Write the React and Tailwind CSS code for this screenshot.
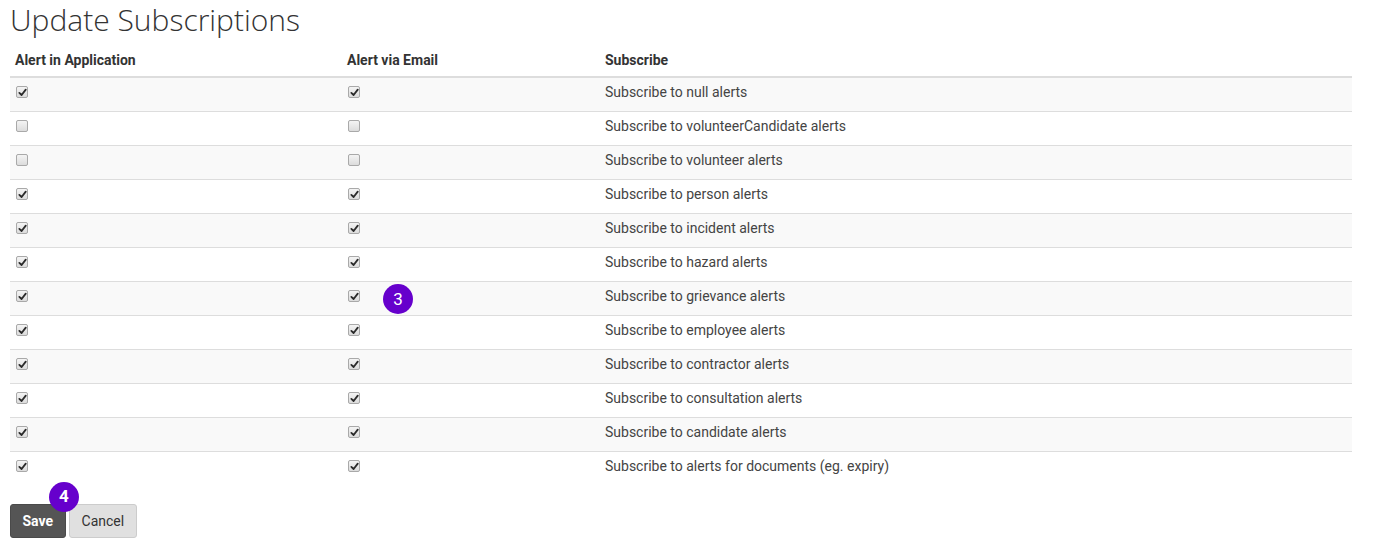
import React from "react";

const ROWS = [
  { app: true,  email: true,  label: "Subscribe to null alerts" },
  { app: false, email: false, label: "Subscribe to volunteerCandidate alerts" },
  { app: false, email: false, label: "Subscribe to volunteer alerts" },
  { app: true,  email: true,  label: "Subscribe to person alerts" },
  { app: true,  email: true,  label: "Subscribe to incident alerts" },
  { app: true,  email: true,  label: "Subscribe to hazard alerts" },
  { app: true,  email: true,  label: "Subscribe to grievance alerts", badge: "3" },
  { app: true,  email: true,  label: "Subscribe to employee alerts" },
  { app: true,  email: true,  label: "Subscribe to contractor alerts" },
  { app: true,  email: true,  label: "Subscribe to consultation alerts" },
  { app: true,  email: true,  label: "Subscribe to candidate alerts" },
  { app: true,  email: true,  label: "Subscribe to alerts for documents (eg. expiry)" },
];

function Check({ checked }) {
  return (
    <span className="inline-flex w-[12px] h-[12px] rounded-[2px] border border-[#a9a9a9] bg-gradient-to-b from-[#f4f4f4] to-[#dcdcdc] items-center justify-center align-top mt-[2px] ml-[1px]">
      {checked && (
        <svg width="9" height="9" viewBox="0 0 10 10">
          <path d="M1.5 5.4 L4 7.8 L8.6 1.8" fill="none" stroke="#2b2b2b" strokeWidth="2" strokeLinecap="round" strokeLinejoin="round" />
        </svg>
      )}
    </span>
  );
}

function Badge({ n, className = "" }) {
  return (
    <span className={`absolute w-[30px] h-[30px] rounded-full bg-[#6600cc] text-white flex items-center justify-center text-[17px] ${className}`}>
      {n}
    </span>
  );
}

export default function App() {
  return (
    <div className="px-[10px] bg-white text-[#333] font-['Roboto',sans-serif] text-[14px] min-h-[556px]">
      <h1 className="font-['Open_Sans',sans-serif] font-light text-[30px] leading-[40px] text-[#333] mb-[3px]">
        Update Subscriptions
      </h1>

      <table className="w-[1342px] border-collapse">
        <thead>
          <tr>
            <th className="w-[332px] text-left font-bold px-[5px] pt-[9px] pb-[7px] leading-[17px] border-b-2 border-[#ddd]">Alert in Application</th>
            <th className="w-[258px] text-left font-bold px-[5px] pt-[9px] pb-[7px] leading-[17px] border-b-2 border-[#ddd]">Alert via Email</th>
            <th className="text-left font-bold px-[5px] pt-[9px] pb-[7px] leading-[17px] border-b-2 border-[#ddd]">Subscribe</th>
          </tr>
        </thead>
        <tbody>
          {ROWS.map((r, i) => (
            <tr key={i} className={i % 2 === 0 ? "bg-[#f9f9f9]" : "bg-white"}>
              <td className="px-[5px] pt-[6px] pb-[10px] leading-[17px] border-t border-[#ddd]"><Check checked={r.app} /></td>
              <td className="relative px-[5px] pt-[6px] pb-[10px] leading-[17px] border-t border-[#ddd]">
                <Check checked={r.email} />
                {r.badge && <Badge n={r.badge} className="left-[41px] top-[2px]" />}
              </td>
              <td className="px-[5px] pt-[6px] pb-[10px] leading-[17px] border-t border-[#ddd] text-[#444]">{r.label}</td>
            </tr>
          ))}
        </tbody>
      </table>

      <div className="relative flex gap-[3px] mt-[19px]">
        <button className="h-[34px] px-[11.5px] rounded-[3px] bg-[#555] border border-[#4a4a4a] text-white font-bold text-[14px]">Save</button>
        <button className="h-[34px] px-[12px] rounded-[3px] bg-[#e0e0e0] border border-[#ccc] text-[#333] text-[14px]">Cancel</button>
        <Badge n="4" className="left-[39px] top-[-22px] font-bold" />
      </div>
    </div>
  );
}
